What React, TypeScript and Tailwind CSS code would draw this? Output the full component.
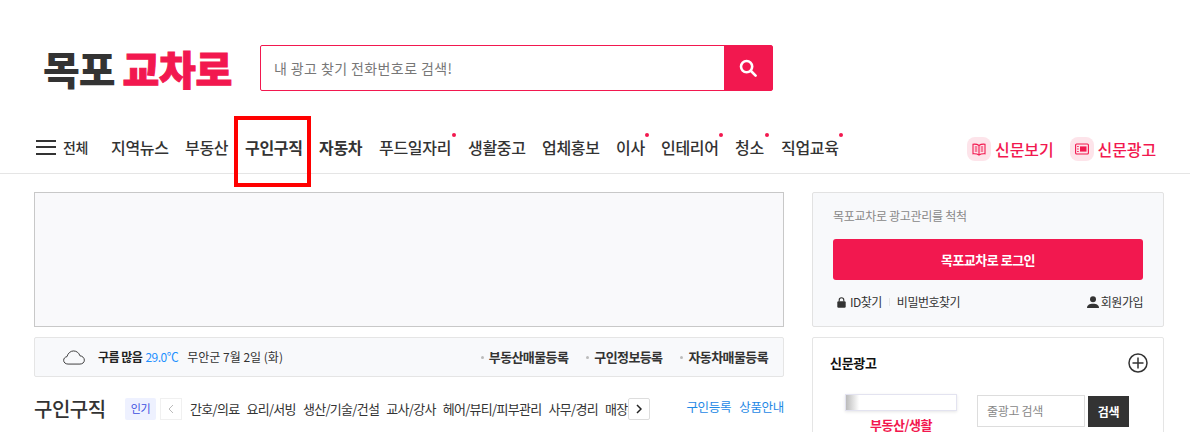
const FONT = "font-['Noto_Sans_CJK_KR','Noto_Sans',sans-serif]"

const navItems = [
  { label: '지역뉴스', w: 'w-[74px]' },
  { label: '부동산', w: 'w-[60px]' },
  { label: '구인구직', w: 'w-[74px]', bold: true },
  { label: '자동차', w: 'w-[60px]', bold: true },
  { label: '푸드일자리', w: 'w-[89px]', dot: true },
  { label: '생활중고', w: 'w-[74px]' },
  { label: '업체홍보', w: 'w-[74px]' },
  { label: '이사', w: 'w-[45px]', dot: true },
  { label: '인테리어', w: 'w-[74px]', dot: true },
  { label: '청소', w: 'w-[46px]', dot: true },
  { label: '직업교육', w: 'w-[74px]', dot: true },
]

const popular = ['간호/의료', '요리/서빙', '생산/기술/건설', '교사/강사', '헤어/뷰티/피부관리', '사무/경리', '매장관리']

function SearchIcon() {
  return (
    <svg width="18" height="18" viewBox="0 0 18 18" fill="none" stroke="#fff" strokeWidth="2.6">
      <circle cx="7.6" cy="7.6" r="5.6" />
      <path d="M12 12l4.600 4.600" strokeLinecap="round" />
    </svg>
  )
}

function BookIcon() {
  return (
    <svg width="14" height="13" viewBox="0 0 14 13" fill="none" stroke="#f2184f" strokeWidth="1.100">
      <path d="M7 2.500C5.500 1.300 3 1 1 1.200v9.600c2-.2 4.500.1 6 1.300 1.500-1.200 4-1.500 6-1.300V1.200C11 1 8.500 1.300 7 2.500zM7 2.500v9.600" />
      <path d="M2.800 4h2.500M2.800 6h2.500M2.800 8h2.500M8.700 4h2.500M8.700 6h2.500M8.700 8h2.500" strokeWidth="1" />
    </svg>
  )
}

function PaperIcon() {
  return (
    <svg width="14" height="12" viewBox="0 0 14 12" fill="none" stroke="#f2184f" strokeWidth="1.100">
      <rect x="0.600" y="1" width="12.800" height="10" rx="1" />
      <rect x="5" y="3.400" width="6.500" height="5.200" fill="#f2184f" stroke="none" />
      <path d="M2.200 3.500h1.500M2.200 6h1.500M2.200 8.500h1.500" strokeWidth="1" />
    </svg>
  )
}

function CloudIcon() {
  return (
    <svg width="22" height="15" viewBox="0 0 24 16" fill="none" stroke="#333" strokeWidth="1" preserveAspectRatio="none">
      <path d="M5.500 15C2.700 15 .7 13.300.7 11c0-2 1.500-3.600 3.600-3.900C5.400 3.300 8.300 1 11.500 1c3.300 0 6 2.100 7 5.200 2.700.2 4.800 2.200 4.800 4.600 0 2.400-2 4.200-4.800 4.200h-13z" />
    </svg>
  )
}

function LockIcon() {
  return (
    <svg width="9" height="11" viewBox="0 0 9 11" fill="#333">
      <path d="M2.200 4.500V3a2.300 2.300 0 014.600 0v1.500" fill="none" stroke="#333" strokeWidth="1.100" />
      <rect x="0.300" y="4.300" width="8.400" height="6.500" rx="1.200" />
    </svg>
  )
}

function UserIcon() {
  return (
    <svg width="12" height="12" viewBox="0 0 12 12" fill="#333">
      <circle cx="6" cy="3.300" r="3" />
      <path d="M0 12c0-2.800 2.400-4.200 6-4.200s6 1.400 6 4.200z" />
    </svg>
  )
}

function QuickLink({ label }: { label: string }) {
  return (
    <div className="flex items-center gap-[5px]">
      <span className="w-[3px] h-[3px] rounded-full bg-[#bbb]" />
      <span className="text-[13px] font-bold text-[#333] tracking-[-0.6px]">{label}</span>
    </div>
  )
}

export default function App() {
  return (
    <div className={`relative h-[432px] w-[1190px] overflow-hidden bg-white tracking-[-0.3px] ${FONT}`}>
      {/* logo + search */}
      <div className="flex items-center h-[136px] pl-[43px]">
        <div className="flex items-center gap-[8px] w-[217px] text-[40px] leading-none font-black tracking-[-1px]">
          <span className="text-[#333]">목포</span>
          <span className="text-[#f2184f] tracking-[-0.4px] [-webkit-text-stroke:1px_#f2184f]">교차로</span>
        </div>
        <div className="flex w-[513px] h-[46px] border border-[#f2184f] rounded-[2px]">
          <div className="flex-1 flex items-center pl-[13px] text-[14px] text-[#777] tracking-[0.4px]">내 광고 찾기 전화번호로 검색!</div>
          <div className="w-[48px] bg-[#f2184f] flex items-center justify-center">
            <SearchIcon />
          </div>
        </div>
      </div>

      {/* nav */}
      <div className="flex items-center h-[22px] pb-[15px] pl-[36px] pr-[34px] border-b border-[#e5e5e5] box-content">
        <div className="flex items-center gap-[7px] w-[68px]">
          <div className="flex flex-col gap-[4.500px] w-[20px]">
            <span className="h-[2px] bg-[#333]" />
            <span className="h-[2px] bg-[#333]" />
            <span className="h-[2px] bg-[#333]" />
          </div>
          <span className="text-[14px] font-medium text-[#333]">전체</span>
        </div>
        <div className="flex items-center">
          {navItems.map((item) => (
            <div key={item.label} className={`relative ${item.w} pl-[7px] text-[16px] ${item.bold ? 'font-bold' : 'font-medium'} text-[#333] whitespace-nowrap`}>
              {item.label}
              {item.dot && <span className="absolute top-[-2px] right-[5px] w-[4px] h-[4px] rounded-full bg-[#f2184f]" />}
            </div>
          ))}
        </div>
        <div className="ml-auto flex items-center gap-[16px] translate-y-[2px] tracking-[-0.1px]">
          <div className="flex items-center gap-[4px]">
            <div className="w-[24px] h-[24px] rounded-[8px] bg-[#fde4ea] flex items-center justify-center"><BookIcon /></div>
            <span className="text-[16px] font-medium text-[#f2184f]">신문보기</span>
          </div>
          <div className="flex items-center gap-[4px]">
            <div className="w-[24px] h-[24px] rounded-[8px] bg-[#fde4ea] flex items-center justify-center"><PaperIcon /></div>
            <span className="text-[16px] font-medium text-[#f2184f]">신문광고</span>
          </div>
        </div>
      </div>

      {/* body */}
      <div className="flex gap-[28px] pl-[34px] pr-[26px] pt-[18px]">
        <div className="w-[750px] shrink-0 flex flex-col">
          <div className="h-[135px] bg-[#f9f9fb] border border-[#c8c8c8]" />
          <div className="mt-[10px] h-[40px] flex items-center bg-[#f8f9fb] border border-[#e5e5e5] rounded-[2px] pl-[28px] pr-[15px]">
            <CloudIcon />
            <span className="ml-[13px] text-[12px] font-bold text-[#222] tracking-[-0.5px]">구름 많음</span>
            <span className="ml-[3px] text-[12px] text-[#1e90ff] tracking-[-0.5px]">29.0℃</span>
            <span className="ml-[9px] text-[12px] text-[#333] tracking-[0px]">무안군 7월 2일 (화)</span>
            <div className="ml-auto flex items-center gap-[18px]">
              <QuickLink label="부동산매물등록" />
              <QuickLink label="구인정보등록" />
              <QuickLink label="자동차매물등록" />
            </div>
          </div>
          <div className="mt-[13px] h-[37px] flex items-center">
            <span className="w-[91px] text-[20px] font-medium text-[#333] tracking-[-0.5px]">구인구직</span>
            <span className="w-[31px] h-[22px] rounded-[2px] bg-[#eef1ff] flex items-center justify-center text-[11px] text-[#3b4fe0]">인기</span>
            <div className="ml-[4px] w-[22px] h-[22px] border border-[#f0f0f0] flex items-center justify-center text-[#bbb]">
              <svg width="6" height="10" viewBox="0 0 6 10" fill="none" stroke="currentColor" strokeWidth="1"><path d="M5 1L1 5l4 4" /></svg>
            </div>
            <div className="ml-[8px] w-[438px] flex items-center overflow-hidden">
              <div className="flex gap-[7px] whitespace-nowrap text-[13px] text-[#333] tracking-[-0.7px]">
                {popular.map((p) => <span key={p}>{p}</span>)}
              </div>
            </div>
            <div className="w-[22px] h-[22px] border border-[#ddd] rounded-[2px] flex items-center justify-center bg-white text-[#222]">
              <svg width="6" height="10" viewBox="0 0 6 10" fill="none" stroke="currentColor" strokeWidth="1.500"><path d="M1 1l4 4-4 4" /></svg>
            </div>
            <div className="ml-auto flex gap-[8px] text-[12.500px] text-[#1e88e5] -translate-y-[1px]">
              <span>구인등록</span>
              <span>상품안내</span>
            </div>
          </div>
        </div>

        <div className="w-[352px] shrink-0 flex flex-col">
          <div className="h-[135px] bg-[#f8f9fb] border border-[#e2e2e2] rounded-[2px] px-[20px] pt-[15px]">
            <div className="text-[12px] text-[#888] leading-[16px]">목포교차로 광고관리를 척척</div>
            <div className="mt-[15px] h-[41px] rounded-[3px] bg-[#f2184f] flex items-center justify-center text-[13px] font-bold text-white tracking-[-0.5px]">목포교차로 로그인</div>
            <div className="mt-[13px] flex items-center justify-between text-[12px] text-[#333] pl-[4px] tracking-[-0.5px]">
              <div className="flex items-center">
                <LockIcon />
                <span className="ml-[4px]">ID찾기</span>
                <span className="mx-[7px] w-px h-[8px] bg-[#e5e5e5]" />
                <span>비밀번호찾기</span>
              </div>
              <div className="flex items-center">
                <UserIcon />
                <span className="ml-[2px]">회원가입</span>
              </div>
            </div>
          </div>
          <div className="mt-[10px] h-[120px] border border-[#e5e5e5] rounded-[2px] pl-[17px] pr-[15px] pt-[15px]">
            <div className="flex items-center justify-between">
              <span className="text-[13px] font-bold text-[#111]">신문광고</span>
              <svg width="20" height="20" viewBox="0 0 20 20" fill="none" stroke="#333" strokeWidth="1.500">
                <circle cx="10" cy="10" r="9" />
                <path d="M10 4.500v11M4.500 10h11" />
              </svg>
            </div>
            <div className="flex mt-[21px]">
              <div className="w-[147px] flex flex-col items-center">
                <div className="w-[112px] h-[17px] border border-[#e3e3f0] shadow-[0_1px_3px_rgba(0,0,0,0.1)] bg-[linear-gradient(90deg,#bbb,#fff_12%)] mr-[6px]" />
                <span className="mt-[4px] mr-[5px] text-[13px] font-bold text-[#f2184f] tracking-[-0.5px]">부동산/생활</span>
              </div>
              <div className="flex h-[32px] gap-[3px] mt-[1px]">
                <div className="w-[108px] h-[32px] border border-[#ddd] flex items-center pl-[9px] text-[12px] text-[#888]">줄광고 검색</div>
                <div className="w-[41px] h-[31px] mt-[1px] bg-[#333] flex items-center justify-center text-[12px] font-bold text-white">검색</div>
              </div>
            </div>
          </div>
        </div>
      </div>

      {/* highlight box */}
      <div className="absolute left-[234px] top-[116px] w-[77px] h-[71px] border-[4px] border-[#ff0000]" />
    </div>
  )
}
